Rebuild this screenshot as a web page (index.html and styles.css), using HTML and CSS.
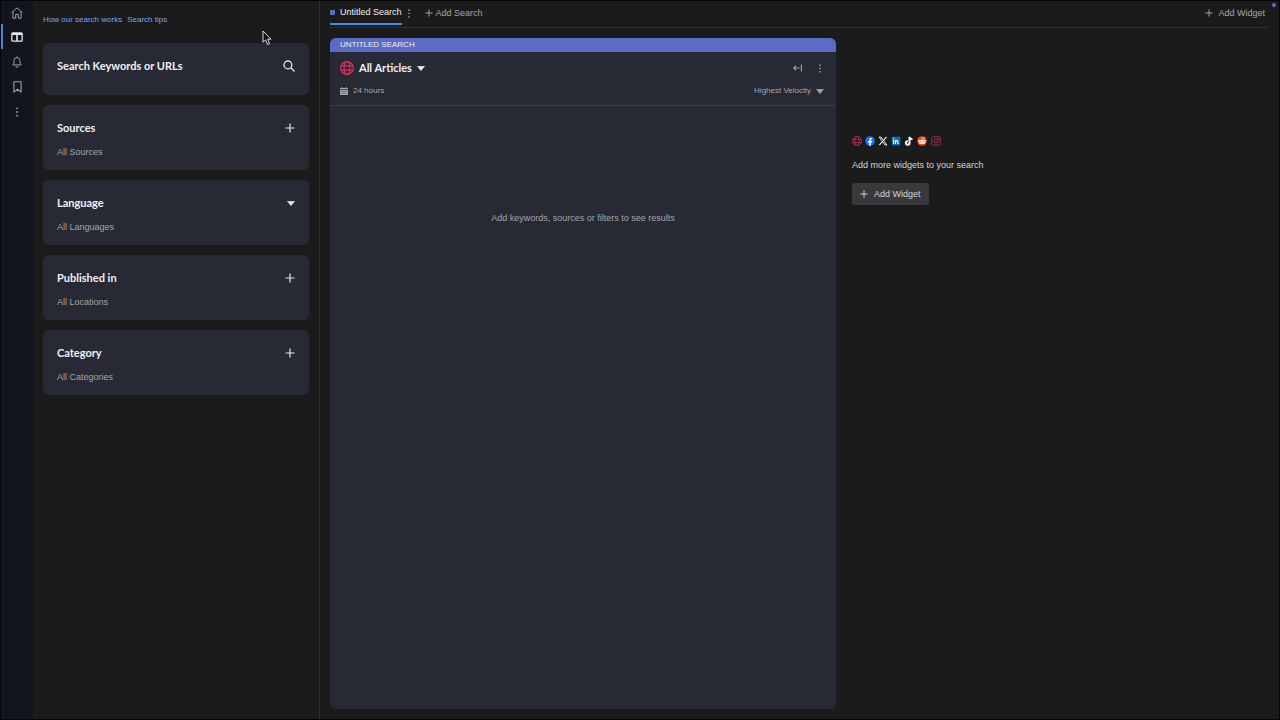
FILE: index.html
```html
<!DOCTYPE html>
<html lang="en">
<head>
  <meta charset="UTF-8" />
  <meta name="viewport" content="width=device-width, initial-scale=1.0" />
  <title>Untitled Search</title>
  <link rel="stylesheet" href="styles.css">
</head>
<body>

  <!-- Shared icons -->
  <svg class="sprite" aria-hidden="true">
    <symbol id="plus" viewBox="0 0 10 10"><path d="M5 .5v9M.5 5h9" fill="none" stroke="currentColor" stroke-width="1.2"/></symbol>
    <symbol id="caret" viewBox="0 0 8 5"><path d="M.4.3h7.2L4 4.7z" fill="currentColor" stroke="currentColor" stroke-width=".5" stroke-linejoin="round"/></symbol>
    <symbol id="dots" viewBox="0 0 4 10"><g fill="currentColor"><circle cx="2" cy="1.3" r=".9"/><circle cx="2" cy="5" r=".9"/><circle cx="2" cy="8.7" r=".9"/></g></symbol>
    <symbol id="globe" viewBox="0 0 14 14"><g fill="none" stroke="currentColor" stroke-width="1.2"><circle cx="7" cy="7" r="6.3"/><ellipse cx="7" cy="7" rx="2.9" ry="6.3"/><path d="M1.2 4.8h11.6M1.2 9.2h11.6"/></g></symbol>
  </svg>

  <div class="app">
    <nav class="rail">
      <a href="#" aria-label="Home"><svg width="12" height="12" viewBox="0 0 12 12"><path d="M.6 5.6 6 .9l5.4 4.7M2 4.6v6.6h2.7V7.4h2.6v3.8H10V4.6" fill="none" stroke="currentColor" stroke-linejoin="round"/></svg></a>
      <a href="#" class="active" aria-label="Search"><svg width="12" height="10" viewBox="0 0 12 10"><path d="M1.8.2h8.4Q11.8.2 11.8 1.8v6.4q0 1.6-1.6 1.6H1.8Q.2 9.8.2 8.2V1.8Q.2.2 1.8.2zM1.5 3v5q0 .5.5.5h3.2V3zm5.3 0v5.5H10q.5 0 .5-.5V3z" fill="currentColor" fill-rule="evenodd"/></svg></a>
      <a href="#" aria-label="Alerts"><svg width="10" height="12" viewBox="0 0 10 12"><path d="M5 .4v1.2M.9 8.9h8.2Q8 7.8 8 6V4.6a3 3 0 0 0-6 0V6q0 1.8-1.1 2.9zM3.9 10.2a1.1 1.1 0 0 0 2.2 0" fill="none" stroke="currentColor" stroke-linejoin="round"/></svg></a>
      <a href="#" aria-label="Saved"><svg width="9" height="12" viewBox="0 0 9 12"><path d="M.9.8h7.2v10.3L4.5 8.3.9 11.1z" fill="none" stroke="currentColor" stroke-width="1.1" stroke-linejoin="round"/></svg></a>
      <a href="#" aria-label="More"><svg width="4" height="10"><use href="#dots"/></svg></a>
    </nav>

    <aside class="sidebar">
      <div class="help">
        <a href="#">How our search works</a>
        <a href="#">Search tips</a>
      </div>
      <section class="card card-search">
        <div class="card-head">
          <h2>Search Keywords or URLs</h2>
          <button aria-label="Search"><svg width="12" height="12" viewBox="0 0 12 12"><g fill="none" stroke="currentColor" stroke-width="1.3"><circle cx="4.9" cy="4.9" r="3.9"/><path d="m7.8 7.8 3.7 3.7"/></g></svg></button>
        </div>
      </section>
      <section class="card">
        <div class="card-head">
          <h2>Sources</h2>
          <button aria-label="Add source"><svg width="10" height="10"><use href="#plus"/></svg></button>
        </div>
        <p>All Sources</p>
      </section>
      <section class="card">
        <div class="card-head">
          <h2>Language</h2>
          <button aria-label="Choose language"><svg width="8" height="5"><use href="#caret"/></svg></button>
        </div>
        <p>All Languages</p>
      </section>
      <section class="card">
        <div class="card-head">
          <h2>Published in</h2>
          <button aria-label="Add location"><svg width="10" height="10"><use href="#plus"/></svg></button>
        </div>
        <p>All Locations</p>
      </section>
      <section class="card">
        <div class="card-head">
          <h2>Category</h2>
          <button aria-label="Add category"><svg width="10" height="10"><use href="#plus"/></svg></button>
        </div>
        <p>All Categories</p>
      </section>
    </aside>

    <main class="main">
      <header class="tabs">
        <button class="tab"><span class="square"></span>Untitled Search</button>
        <button class="tab-menu" aria-label="Tab options"><svg width="4" height="9"><use href="#dots"/></svg></button>
        <button class="add"><svg width="8" height="8"><use href="#plus"/></svg>Add Search</button>
        <button class="add add-right"><svg width="8" height="8"><use href="#plus"/></svg>Add Widget</button>
      </header>

      <div class="board">
        <section class="panel">
          <div class="banner">UNTITLED SEARCH</div>
          <div class="panel-head">
            <div class="row">
              <button class="title"><svg class="pink" width="14" height="14"><use href="#globe"/></svg>All Articles<svg width="8" height="5"><use href="#caret"/></svg></button>
              <div class="tools">
                <button aria-label="Collapse"><svg width="9" height="8" viewBox="0 0 9 8"><path d="M8.4.5v7M6.6 4H.8M3 1.7.7 4 3 6.3" fill="none" stroke="currentColor" stroke-width="1.1"/></svg></button>
                <button aria-label="Widget options"><svg width="4" height="9"><use href="#dots"/></svg></button>
              </div>
            </div>
            <div class="row small">
              <button class="period"><svg width="8" height="8" viewBox="0 0 8 8"><path d="M1.6 0h1v1h2.8V0h1v1H8v1.3H0V1h1.6zM0 2.9h8V8H0z" fill="currentColor"/><path d="M1.3 4.4h5.4M1.3 6.3h5.4" stroke="#272a34" stroke-width=".6" stroke-dasharray="1.2 .9"/></svg>24 hours</button>
              <button class="sort">Highest Velocity<svg width="8" height="5"><use href="#caret"/></svg></button>
            </div>
          </div>
          <p class="empty">Add keywords, sources or filters to see results</p>
        </section>

        <section class="more">
          <div class="networks">
            <svg class="pink dim" viewBox="0 0 14 14"><use href="#globe"/></svg>
            <svg viewBox="0 0 10 10"><circle cx="5" cy="5" r="4.8" fill="#1877f2"/><path d="M4.3 9.8V6.4H3V5h1.3V3.9q0-1.9 1.9-1.9h.9v1.3h-.6q-.8 0-.8.8V5h1.4l-.2 1.4H5.7v3.4z" fill="#fff"/></svg>
            <svg viewBox="0 0 10 10"><path d="M1.1 1h1.8l6 8H7.1z" fill="none" stroke="#eee"/><path d="M8.5.8 5.5 4.3M4.4 5.6 1.3 9.2" stroke="#eee" stroke-width="1.1"/></svg>
            <svg viewBox="0 0 10 10"><rect x=".7" y=".7" width="8.6" height="8.6" rx=".6" fill="#0a73b7"/><path d="M2.6 4.1v3.8M2.6 2.1v1.1M4.5 7.9V4.1M4.5 5.8q0-1.2 1.2-1.2t1.2 1.2v2.1" fill="none" stroke="#fff" stroke-width="1.1"/></svg>
            <svg viewBox="0 0 10 10"><g fill="none" stroke-width="1.5"><path d="M5.2.7v6a1.8 1.8 0 1 1-1.8-1.8M5.2.7q.2 2.2 2.8 2.4" stroke="#25f4ee"/><path d="M6 1.2v6a1.8 1.8 0 1 1-1.8-1.8M6 1.2q.2 2.2 2.8 2.4" stroke="#fe2c55"/><path d="M5.6.9v6a1.8 1.8 0 1 1-1.8-1.8M5.6.9q.2 2.2 2.8 2.4" stroke="#fff"/></g></svg>
            <svg viewBox="0 0 10 10"><circle cx="5" cy="5" r="4.8" fill="#ff4500"/><g fill="#fff"><ellipse cx="5" cy="5.9" rx="3.1" ry="2.2"/><circle cx="1.9" cy="4.8" r=".8"/><circle cx="8.1" cy="4.8" r=".8"/><circle cx="6.8" cy="2.2" r=".7"/></g><path d="m5 4 .4-2 1.4.3" fill="none" stroke="#fff" stroke-width=".5"/><g fill="#ff4500"><circle cx="3.8" cy="5.4" r=".6"/><circle cx="6.2" cy="5.4" r=".6"/></g><path d="M3.7 6.8q1.3.8 2.6 0" fill="none" stroke="#ff4500" stroke-width=".5"/></svg>
            <svg class="insta" viewBox="0 0 10 10"><g fill="none" stroke="#a82e62"><rect x=".8" y=".8" width="8.4" height="8.4" rx="1.6"/><circle cx="5" cy="5" r="2"/></g><circle cx="7.4" cy="2.6" r=".6" fill="#a82e62"/></svg>
          </div>
          <p>Add more widgets to your search</p>
          <button class="add-widget"><svg width="8" height="8"><use href="#plus"/></svg>Add Widget</button>
        </section>
      </div>
    </main>
  </div>

  <span class="status-dot"></span>
  <svg class="cursor" width="10" height="16" viewBox="0 0 10 16"><path d="M1 1v11.2l2.6-2.3 2 4.6 2-.9-2-4.4h3.3z" fill="#111" stroke="#ddd" stroke-linejoin="round"/></svg>

</body>
</html>
```

FILE: styles.css
```css
* { box-sizing: border-box; margin: 0; padding: 0; }
body {
  background-color: #1b1b1c;
  font-family: "Liberation Sans", Arial, sans-serif;
  font-size: 9px;
  line-height: 14px;
  color: #a5a6a9;
}
button {
  display: flex;
  align-items: center;
  border: none;
  background: none;
  color: inherit;
  font: inherit;
  cursor: pointer;
}
a { text-decoration: none; }
svg { display: block; flex: none; }
.sprite { position: absolute; width: 0; height: 0; }
.app {
  display: flex;
  min-height: 100vh;
  border: 1px solid #050506;
}

/* Left rail */
.rail {
  flex: none;
  width: 32px;
  background-color: #12151d;
}
.rail a {
  display: flex;
  align-items: center;
  justify-content: center;
  height: 25px;
  color: #a0a1a4;
  border-left: 2px solid transparent;
  border-right: 2px solid transparent;
}
.rail a:first-child { height: 23px; }
.rail .active {
  color: #e6e6e8;
  border-left-color: #3f82ea;
}

/* Filters */
.sidebar {
  flex: none;
  width: 287px;
  display: flex;
  flex-direction: column;
  gap: 10px;
  padding: 12px 10px;
  border-right: 1px solid #2c2e32;
}
.help {
  display: flex;
  gap: 5px;
  font-size: 8px;
  margin-bottom: 6px;
}
.help a { color: #7da2f2; }
.card {
  padding: 14px;
  height: 65px;
  background-color: #272a34;
  border-radius: 6px;
}
.card-search { height: 52px; }
.card-head {
  display: flex;
  align-items: center;
  justify-content: space-between;
  height: 18px;
}
.card h2, .title {
  font-family: Lato, "Liberation Sans", sans-serif;
  font-size: 11px;
  font-weight: 700;
  color: #f0f0f2;
}
.card button { color: #e6e6e8; }
.card p { margin-top: 8px; }

/* Search tabs */
.main {
  flex: 1;
  min-width: 0;
  display: flex;
  flex-direction: column;
  padding: 0 10px;
}
.tabs {
  display: flex;
  height: 27px;
  border-bottom: 1px solid #2c2e32;
}
.tab {
  gap: 5px;
  height: 24px;
  border-bottom: 2px solid #3d8bf2;
  color: #f0f0f2;
}
.square {
  width: 5px;
  height: 5px;
  border-radius: 1px;
  background-color: #5c6bc8;
}
.tab-menu { height: 24px; margin-left: 5px; }
.add { gap: 3px; height: 24px; margin-left: 14px; }
.add-right { gap: 5px; margin-left: auto; padding-right: 4px; }

/* Board */
.board {
  flex: 1;
  display: flex;
  gap: 16px;
  padding: 10px 0;
}
.panel {
  flex: 0 1 506px;
  background-color: #272a34;
  border-radius: 6px;
  overflow: hidden;
}
.banner {
  padding: 0 10px;
  font-size: 8px;
  color: #f0f0f2;
  background-color: #5c6bc4;
}
.panel-head {
  padding: 8px 12px 7px 10px;
  border-bottom: 1px solid #3a3c43;
}
.row {
  display: flex;
  align-items: center;
  justify-content: space-between;
  height: 16px;
}
.title { gap: 5px; }
.tools { display: flex; gap: 16px; padding-right: 2px; }
.small { height: 14px; margin-top: 8px; font-size: 8px; }
.period, .sort { gap: 5px; }
.pink { color: #df2e5c; }
.empty { padding: 105px 10px; text-align: center; }

.more {
  display: flex;
  flex-direction: column;
  align-items: flex-start;
  padding-top: 98px;
}
.networks { display: flex; gap: 3px; }
.networks svg { width: 10px; height: 10px; }
.networks .dim { color: #b92c54; }
.networks .insta { margin-left: 1px; }
.more p { margin: 12px 0 11px; color: #d4d4d6; }
.add-widget {
  gap: 6px;
  height: 22px;
  padding: 0 8px;
  border-radius: 2px;
  background-color: #39393d;
  color: #d4d4d6;
}

.status-dot {
  position: absolute;
  top: 3px;
  right: 4px;
  width: 4px;
  height: 4px;
  border-radius: 50%;
  background-color: #6768dc;
}
.cursor {
  position: absolute;
  top: 30px;
  left: 262px;
}
```
